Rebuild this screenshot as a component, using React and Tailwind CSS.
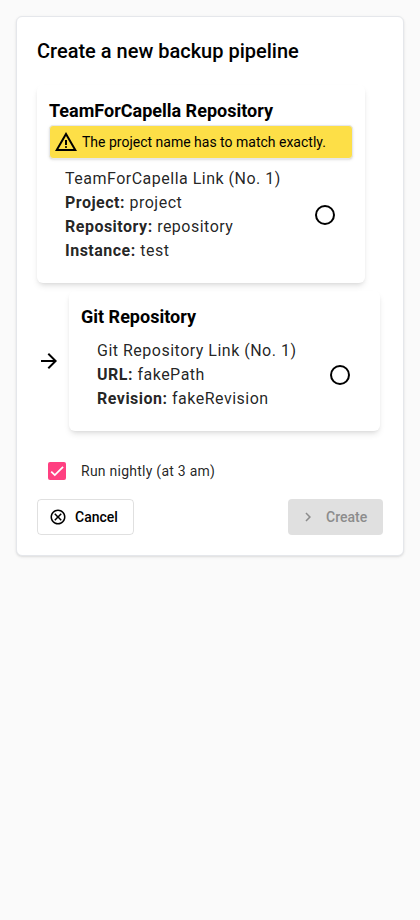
import { MdArrowForward, MdNavigateNext } from "react-icons/md";

function WarningIcon() {
  return (
    <svg viewBox="0 -960 960 960" fill="currentColor" className="size-6 shrink-0">
      <path d="m40-120 440-760 440 760H40Zm138-80h604L480-720 178-200Zm302-40q17 0 28.5-11.5T520-280q0-17-11.5-28.5T480-320q-17 0-28.5 11.5T440-280q0 17 11.5 28.5T480-240Zm-40-120h80v-200h-80v200Z" />
    </svg>
  );
}

function CancelIcon() {
  return (
    <svg viewBox="0 -960 960 960" fill="currentColor" className="size-[18px]">
      <path d="m336-280 144-144 144 144 56-56-144-144 144-144-56-56-144 144-144-144-56 56 144 144-144 144 56 56ZM480-80q-83 0-156-31.500T197-197q-54-54-85.500-127T80-480q0-83 31.500-156T197-763q54-54 127-85.500T480-880q83 0 156 31.500T763-763q54 54 85.500 127T880-480q0 83-31.500 156T763-197q-54 54-127 85.500T480-80Zm0-80q134 0 227-93t93-227q0-134-93-227t-227-93q-134 0-227 93t-93 227q0 134 93 227t227 93Z" />
    </svg>
  );
}

function Card({ title, className, children }) {
  return (
    <section
      className={`rounded-md p-3 shadow-[0_4px_6px_-1px_rgba(0,0,0,0.1),0_2px_4px_-2px_rgba(0,0,0,0.1)] ${className}`}
    >
      <h2 className="text-lg leading-7 font-bold text-black">{title}</h2>
      {children}
    </section>
  );
}

function Option({ title, fields }) {
  return (
    <div className="flex items-center justify-between py-2 pr-[18px] pl-4">
      <div className="text-base leading-6 tracking-[0.496px] whitespace-nowrap text-black/87">
        <div>{title}</div>
        {fields.map(([label, value]) => (
          <div key={label}>
            <b className="font-bold">{label}:</b> {value}
          </div>
        ))}
      </div>
      <span className="size-5 shrink-0 rounded-full border-2 border-black" />
    </div>
  );
}

export default function App() {
  return (
    <div className="min-h-screen bg-[#fafafa] p-4 font-['Roboto',sans-serif] text-black">
      <main className="h-[540px] w-[388px] rounded-md border border-gray-200 bg-white p-5 shadow-[0_1px_3px_rgba(0,0,0,0.1),0_1px_2px_-1px_rgba(0,0,0,0.1)]">
        <h1 className="mb-5 text-xl leading-7 font-medium">Create a new backup pipeline</h1>

        <Card title="TeamForCapella Repository" className="w-[328px]">
          <div className="flex h-[34px] items-center gap-1 rounded border border-gray-200 bg-[#fddf47] px-1 text-sm whitespace-nowrap shadow-sm">
            <WarningIcon />
            The project name has to match exactly.
          </div>
          <Option
            title="TeamForCapella Link (No. 1)"
            fields={[
              ["Project", "project"],
              ["Repository", "repository"],
              ["Instance", "test"],
            ]}
          />
        </Card>

        <div className="mt-2 flex items-center gap-2">
          <MdArrowForward className="size-6 shrink-0" />
          <Card title="Git Repository" className="w-[311px]">
            <Option
              title="Git Repository Link (No. 1)"
              fields={[
                ["URL", "fakePath"],
                ["Revision", "fakeRevision"],
              ]}
            />
          </Card>
        </div>

        <div className="mt-5 flex h-10 items-center gap-[15px] pl-[11px]">
          <span className="flex size-[18px] items-center justify-center rounded-xs bg-[#ff4081]">
            <svg viewBox="0 0 24 24" className="size-[18px]">
              <path
                d="M1.73,12.91 8.1,19.28 22.79,4.59"
                transform="translate(3 3) scale(.75)"
                fill="none"
                stroke="white"
                strokeWidth="3.1"
              />
            </svg>
          </span>
          <span className="text-sm tracking-[0.25px] text-black/87">Run nightly (at 3 am)</span>
        </div>

        <div className="mt-2 flex justify-between">
          <button className="flex h-9 w-[97px] items-center gap-2 rounded border border-black/12 pl-[11px] text-sm font-medium">
            <CancelIcon />
            Cancel
          </button>
          <button
            disabled
            className="flex h-9 w-[95px] items-center gap-[9px] rounded bg-[#e0e0e0] pl-[11px] text-sm font-medium text-[#8c8c8c]"
          >
            <MdNavigateNext className="size-[18px]" />
            Create
          </button>
        </div>
      </main>
    </div>
  );
}
